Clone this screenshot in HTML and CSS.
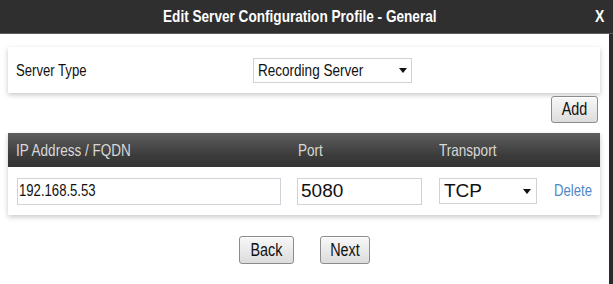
FILE: index.html
```html
<!DOCTYPE html>
<html lang="en">
<head>
  <meta charset="UTF-8" />
  <title>Edit Server Configuration Profile - General</title>
  <link rel="stylesheet" href="styles.css">
</head>
<body>
  <div class="titlebar">
    <h1 class="title n">Edit Server Configuration Profile - General</h1>
    <span class="close n">X</span>
  </div>
  <div class="dialog">
    <div class="panel type-panel">
      <label class="label"><span class="n">Server Type</span></label>
      <div class="select type-select">
        <span class="n">Recording Server</span>
        <i class="arrow"></i>
      </div>
    </div>

    <div class="add-row">
      <button class="btn add"><span class="n c">Add</span></button>
    </div>

    <div class="panel table">
      <div class="thead">
        <div><span class="n">IP Address / FQDN</span></div>
        <div><span class="n">Port</span></div>
        <div><span class="n">Transport</span></div>
      </div>
      <div class="trow">
        <div><div class="field ip"><span class="n">192.168.5.53</span></div></div>
        <div><div class="field port">5080</div></div>
        <div class="transport-cell">
          <div class="select transport-select">
            <span>TCP</span>
            <i class="arrow"></i>
          </div>
          <a class="delete" href="#"><span class="n">Delete</span></a>
        </div>
      </div>
    </div>

    <div class="actions">
      <button class="btn back"><span class="n c">Back</span></button>
      <button class="btn next"><span class="n c">Next</span></button>
    </div>
  </div>
</body>
</html>
```

FILE: styles.css
```css
body {
  margin: 0;
  background: #fff;
  font-family: "Liberation Sans", Arial, sans-serif;
  color: #111;
}
/* no narrow face installed, so squeeze Arial-width text to Arial Narrow */
.n {
  display: inline-block;
  transform: scaleX(0.82);
  transform-origin: left center;
  white-space: nowrap;
}
.n.c { transform-origin: center; }
.titlebar {
  height: 33px;
  display: flex;
  align-items: center;
  background: #2f2f2f;
  border-bottom: 1px solid #5e5e5e;
  color: #fff;
}
.title {
  margin: 0 0 0 163px;
  font-size: 17px;
  font-weight: bold;
  transform: scaleX(0.8);
}
.close {
  margin-left: auto;
  margin-right: 1px;
  width: 17px;
  font-size: 17px;
  font-weight: bold;
}
.dialog {
  height: 250px;
  padding: 13px 9px 0 8px;
  border-right: 4px solid #2b2b2b;
}
.panel {
  background: #fff;
  box-shadow: 0 2px 5px rgba(0, 0, 0, 0.22);
}
.type-panel {
  height: 46px;
  display: flex;
  align-items: center;
  padding: 0 8px;
}
.label {
  width: 237px;
  font-size: 16px;
  padding-top: 1px;
}
.select {
  position: relative;
  display: flex;
  align-items: center;
  box-sizing: border-box;
  border: 1px solid #d2d2d2;
  background: #fff;
}
.select span { margin-left: 4px; }
.arrow {
  position: absolute;
  right: 4px;
  top: 50%;
  margin-top: -2px;
  border-left: 4px solid transparent;
  border-right: 4px solid transparent;
  border-top: 5px solid #111;
}
.type-select {
  width: 159px;
  height: 25px;
  font-size: 16.5px;
}
.add-row {
  display: flex;
  justify-content: flex-end;
  margin-top: 3px;
  padding-right: 2px;
}
.btn {
  height: 27px;
  padding: 0;
  font-family: inherit;
  font-size: 17.5px;
  color: #111;
  border: 1px solid #8c8c8c;
  border-radius: 3px;
  background: linear-gradient(#f8f8f8, #dcdcdc);
  box-shadow: inset 0 1px 0 #fff;
}
.btn.add { width: 47px; }
.table { margin-top: 10px; }
.thead, .trow {
  display: grid;
  grid-template-columns: 282px 141px 1fr;
  padding-left: 8px;
}
.thead {
  height: 34px;
  align-items: center;
  background: linear-gradient(#5e5e5e, #3c3c3c 65%, #333);
  color: #d8d8d8;
  font-size: 16.5px;
}
.trow {
  height: 48px;
  align-items: center;
}
.field {
  box-sizing: border-box;
  height: 27px;
  display: flex;
  align-items: center;
  border: 1px solid #cdd3d8;
  background: #fff;
  color: #111;
}
.ip {
  width: 264px;
  margin-left: 1px;
  padding-left: 1px;
  font-size: 16px;
}
.port {
  width: 125px;
  margin-left: -1px;
  padding-left: 3px;
  font-size: 19px;
}
.transport-cell {
  display: flex;
  align-items: center;
}
.transport-select {
  width: 98px;
  height: 26px;
  font-size: 19px;
}
.transport-select .arrow { right: 5px; }
.delete {
  width: 37px;
  margin-left: 17px;
  color: #4f87c6;
  font-size: 16px;
  text-decoration: none;
}
.actions {
  display: flex;
  justify-content: center;
  gap: 26px;
  margin-top: 21px;
}
.btn.back { width: 55px; height: 28px; }
.btn.next { width: 50px; height: 28px; }
```
